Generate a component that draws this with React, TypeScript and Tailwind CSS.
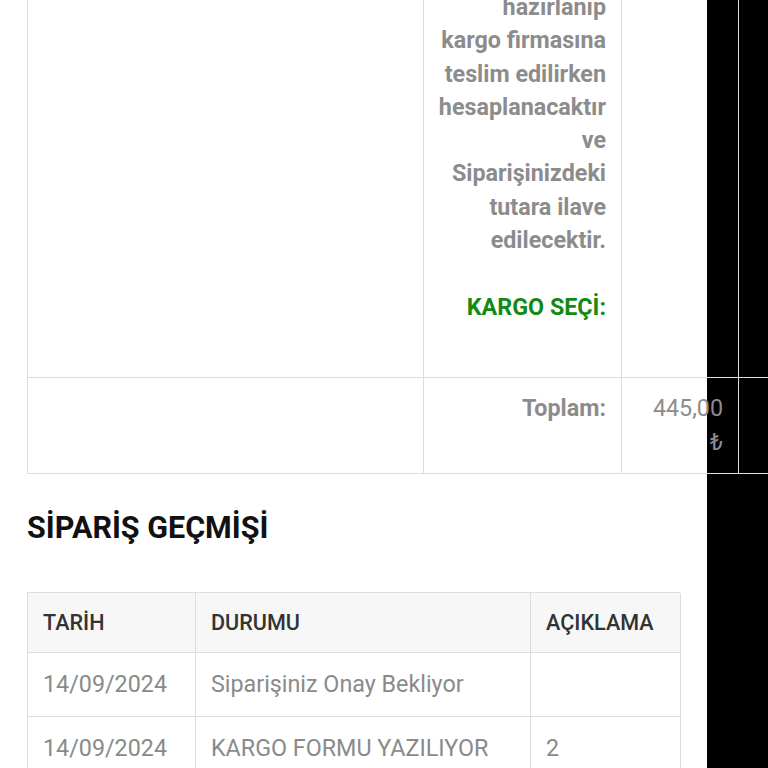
import React from "react";

const font = { fontFamily: "Roboto, 'Noto Sans', sans-serif" };

export default function App() {
  const lines = [
    "hazırlanıp",
    "kargo firmasına",
    "teslim edilirken",
    "hesaplanacaktır",
    "ve",
    "Siparişinizdeki",
    "tutara ilave",
    "edilecektir.",
  ];
  return (
    <div
      className="relative isolate w-[768px] h-[768px] overflow-hidden bg-white"
      style={font}
    >
      <div className="absolute -z-10 left-[707px] top-0 w-[61px] h-full bg-black" />

      {/* top table */}
      <div className="ml-[27px] mt-[-25px] w-[812px] border-l border-t border-[#dddddd]">
        <div className="flex">
          <div className="w-[396px] shrink-0 border-r border-b border-[#dddddd]" />
          <div className="w-[198px] shrink-0 border-r border-b border-[#dddddd] pt-[15px] pb-[53px] pr-[15px] text-right text-[23.3px] leading-[33.3px] font-bold text-[#8c8c8c]">
            {lines.map((l) => (
              <div key={l} className="whitespace-nowrap">
                {l}
              </div>
            ))}
            <div className="h-[33.3px]" />
            <div className="whitespace-nowrap text-[#138a13]">KARGO SEÇİ:</div>
          </div>
          <div className="w-[117px] shrink-0 border-r border-b border-[#dddddd]" />
          <div className="w-[100px] shrink-0 border-r border-b border-[#dddddd]" />
        </div>
        <div className="flex">
          <div className="w-[396px] shrink-0 border-r border-b border-[#dddddd]" />
          <div className="w-[198px] shrink-0 border-r border-b border-[#dddddd] pt-[14.5px] pb-[14px] pr-[15px] text-right text-[23.3px] leading-[33.3px] font-bold text-[#8c8c8c]">
            Toplam:
          </div>
          <div className="w-[117px] shrink-0 border-r border-b border-[#dddddd] pt-[14.5px] pb-[14px] pr-[15px] text-right text-[23.3px] leading-[33.3px] text-[#8c8c8c]">
            <div>445,00</div>
            <div>₺</div>
          </div>
          <div className="w-[100px] shrink-0 border-r border-b border-[#dddddd]" />
        </div>
      </div>

      <h2 className="ml-[27px] mt-[36px] text-[30.5px] leading-[36px] font-bold text-[#111111]">
        SİPARİŞ GEÇMİŞİ
      </h2>

      {/* history table */}
      <div className="ml-[27px] mt-[46px] w-[653px] border-l border-t border-[#dddddd]">
        <div className="flex bg-[#f7f7f7] text-[21.6px] leading-[30px] font-medium text-[#333333]">
          <div className="w-[168px] shrink-0 border-r border-b border-[#dddddd] py-[14.5px] pl-[15px]">
            TARİH
          </div>
          <div className="w-[335px] shrink-0 border-r border-b border-[#dddddd] py-[14.5px] pl-[15px]">
            DURUMU
          </div>
          <div className="w-[150px] shrink-0 border-r border-b border-[#dddddd] py-[14.5px] pl-[15px]">
            AÇIKLAMA
          </div>
        </div>
        {[
          ["14/09/2024", "Siparişiniz Onay Bekliyor", ""],
          ["14/09/2024", "KARGO FORMU YAZILIYOR", "2"],
        ].map((r, i) => (
          <div
            key={i}
            className="flex text-[23.3px] leading-[33.3px] text-[#8a8a8a]"
          >
            <div className="w-[168px] shrink-0 border-r border-b border-[#dddddd] pt-[15px] pb-[14.5px] pl-[15px] whitespace-nowrap">
              {r[0]}
            </div>
            <div className="w-[335px] shrink-0 border-r border-b border-[#dddddd] pt-[15px] pb-[14.5px] pl-[15px] whitespace-nowrap">
              {r[1]}
            </div>
            <div className="w-[150px] shrink-0 border-r border-b border-[#dddddd] pt-[15px] pb-[14.5px] pl-[15px] whitespace-nowrap">
              {r[2]}
            </div>
          </div>
        ))}
      </div>
    </div>
  );
}
